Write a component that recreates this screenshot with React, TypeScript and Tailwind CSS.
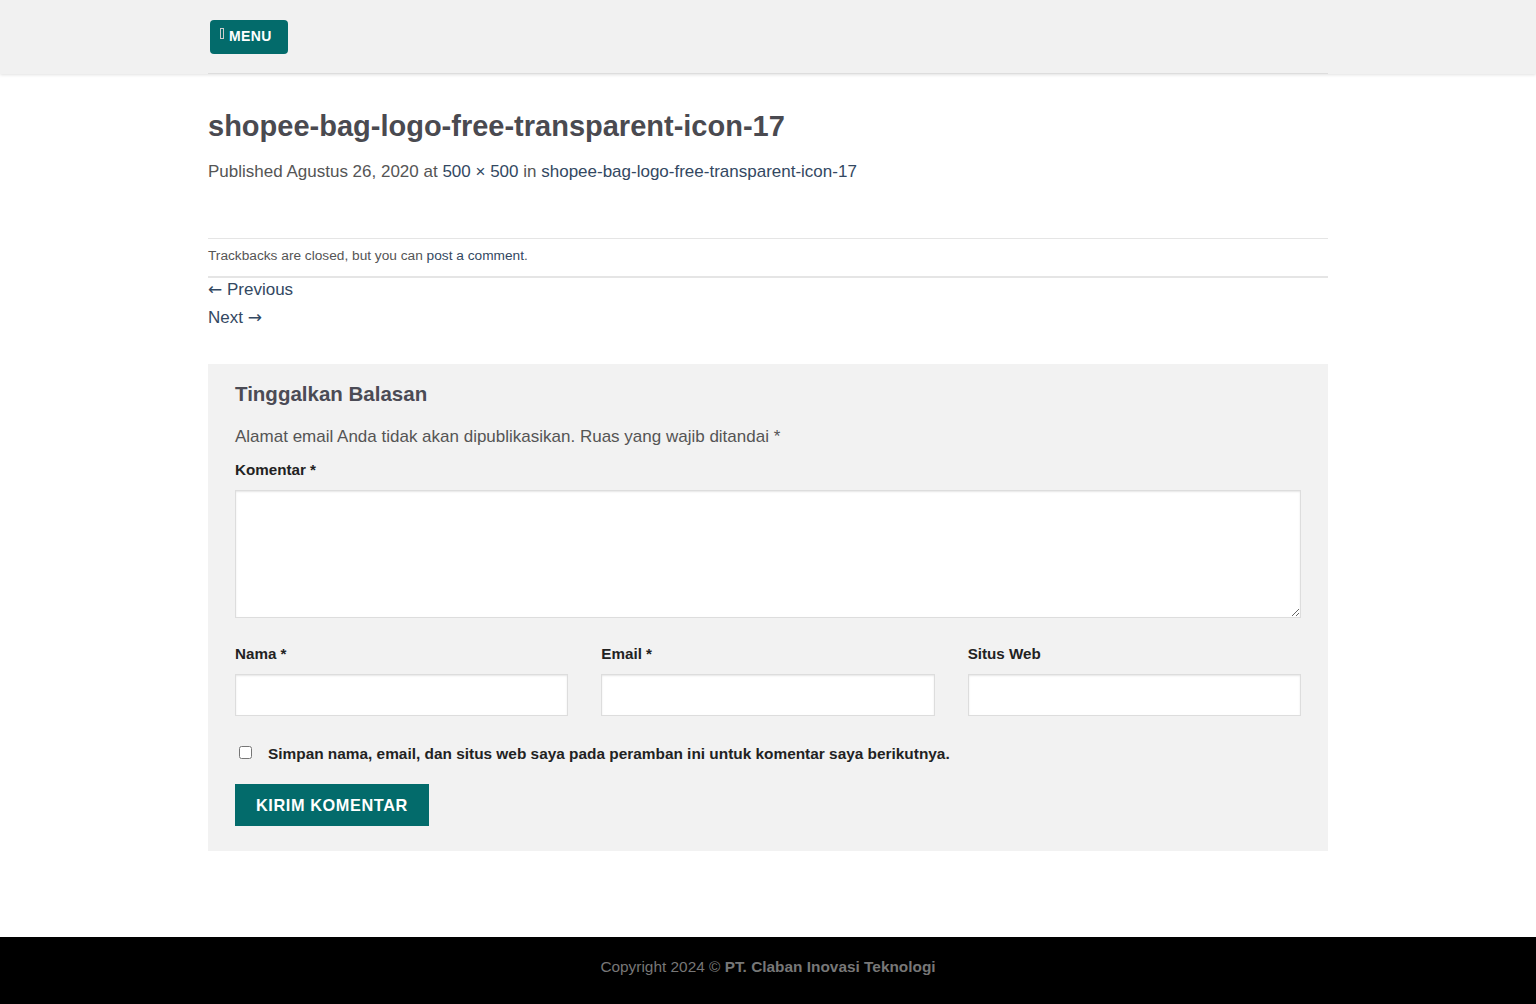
import React from 'react';

const font = { fontFamily: '"Liberation Sans", Arial, sans-serif' };
const arrowFont = { fontFamily: '"DejaVu Sans", sans-serif' };

const Field = ({ label, required }: { label: string; required?: boolean }) => (
  <div className="flex flex-col">
    <label className="text-[15.2px] font-bold text-[#222] leading-[20px] mb-[10px]">
      {label}
      {required ? ' *' : ''}
    </label>
    <input type="text" className="h-[42px] w-full bg-white border border-[#ddd] shadow-[inset_0_1px_2px_rgba(0,0,0,0.1)] outline-none" />
  </div>
);

export default function App() {
  return (
    <div className="min-h-screen bg-white flex flex-col text-[#777]" style={font}>
      <header className="bg-[#f1f1f1] shadow-[0_1px_3px_rgba(0,0,0,0.12)] relative z-10">
        <div className="mx-auto w-[1120px] h-[74px] flex items-center border-b border-[#ddd]">
          <button className="ml-[2px] h-[34px] w-[78px] rounded-[4px] bg-[#036b6b] text-white text-[14px] font-bold tracking-[0.4px] flex items-center pl-[10px] gap-[5px]">
            <span className="inline-block w-[4px] h-[11px] border border-[#ccc] mb-[6px]" />
            MENU
          </button>
        </div>
      </header>

      <main className="mx-auto w-[1120px] flex-1">
        <h1 className="mt-[33px] text-[29px] leading-[38px] font-bold text-[#4a4a50]">
          shopee-bag-logo-free-transparent-icon-17
        </h1>
        <p className="mt-[18px] text-[17px] leading-[18px] text-[#555]">
          Published Agustus 26, 2020 at <a className="text-[#334862]">500 × 500</a> in{' '}
          <a className="text-[#334862]">shopee-bag-logo-free-transparent-icon-17</a>
        </p>

        <div className="mt-[57px] border-t border-[#e5e5e5] pt-[8px] pb-[11px] border-b-2 border-b-[#e5e5e5]">
          <p className="text-[13.7px] leading-[18px] text-[#555]">
            Trackbacks are closed, but you can <a className="text-[#334862]">post a comment</a>.
          </p>
        </div>
        <div className="flex flex-col text-[17px] leading-[28px] text-[#334862] -mt-[2px]">
          <a className="h-[28px]">
            <span style={arrowFont} className="text-[17px] leading-none">←</span> Previous
          </a>
          <a className="h-[28px]">
            Next <span style={arrowFont} className="text-[17px] leading-none">→</span>
          </a>
        </div>

        <section className="mt-[32px] bg-[#f2f2f2] px-[27px] pt-[17px] pb-[25px]">
          <h3 className="text-[20.5px] leading-[26px] font-bold text-[#4b4b55]">Tinggalkan Balasan</h3>
          <p className="mt-[20px] text-[17px] leading-[20px] text-[#555]">
            Alamat email Anda tidak akan dipublikasikan. Ruas yang wajib ditandai *
          </p>
          <label className="block mt-[13px] text-[15.2px] font-bold text-[#222] leading-[20px]">Komentar *</label>
          <textarea className="block mt-[10px] w-full h-[128px] bg-white border border-[#ddd] shadow-[inset_0_1px_2px_rgba(0,0,0,0.1)] outline-none" />
          <div className="mt-[26px] grid grid-cols-3 gap-[33px]">
            <Field label="Nama" required />
            <Field label="Email" required />
            <Field label="Situs Web" />
          </div>
          <div className="mt-[25px] flex items-center gap-[16px] pl-[4px]">
            <input type="checkbox" className="w-[13px] h-[13px]" />
            <span className="text-[15.4px] font-bold text-[#222] leading-[20px] mt-[3px]">
              Simpan nama, email, dan situs web saya pada peramban ini untuk komentar saya berikutnya.
            </span>
          </div>
          <button className="mt-[20px] h-[42px] px-[21px] bg-[#036b6b] text-white text-[16.3px] font-bold tracking-[0.6px] uppercase">
            Kirim Komentar
          </button>
        </section>
      </main>

      <footer className="mt-[86px] bg-black h-[67px] pt-[21px] text-center text-[15.4px] leading-[18px] text-[#777]">
        <span>
          Copyright 2024 © <strong>PT. Claban Inovasi Teknologi</strong>
        </span>
      </footer>
    </div>
  );
}
